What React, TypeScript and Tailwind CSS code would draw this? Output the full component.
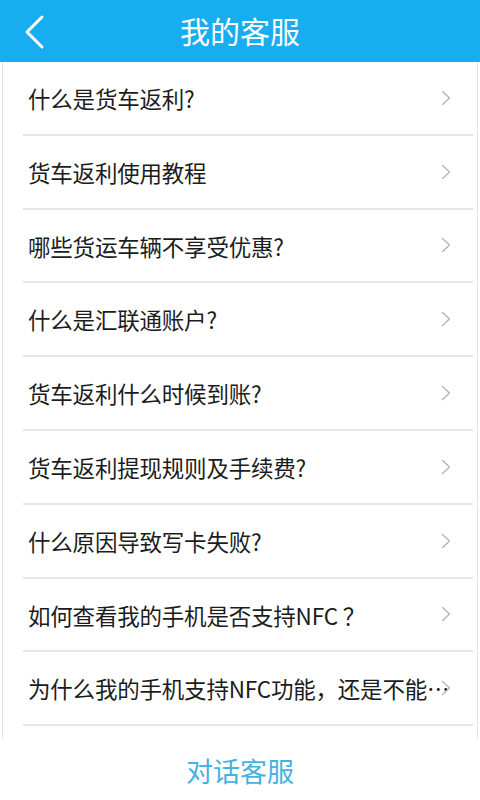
import React from 'react';

const QUESTIONS = [
  '什么是货车返利?',
  '货车返利使用教程',
  '哪些货运车辆不享受优惠?',
  '什么是汇联通账户?',
  '货车返利什么时候到账?',
  '货车返利提现规则及手续费?',
  '什么原因导致写卡失败?',
  '如何查看我的手机是否支持NFC ？',
  '为什么我的手机支持NFC功能，还是不能…',
];

const FONT = { fontFamily: '"Noto Sans CJK SC", "Noto Sans", sans-serif' };

const BackIcon = () => (
  <svg width="24" height="36" viewBox="0 0 24 36" fill="none">
    <path d="M20 3 L5 18 L20 33" stroke="white" strokeWidth="3" strokeLinecap="round" strokeLinejoin="round" />
  </svg>
);

const Chevron = () => (
  <svg width="10" height="16" viewBox="0 0 10 16" fill="none">
    <path d="M1.5 1.5 L8.5 8 L1.5 14.5" stroke="#b5b5b5" strokeWidth="1.4" strokeLinecap="round" strokeLinejoin="round" />
  </svg>
);

const App: React.FC = () => {
  return (
    <div className="w-[480px] h-[800px] bg-white flex flex-col overflow-hidden" style={FONT}>
      <header className="h-[62px] bg-[#18adf0] flex items-center relative shrink-0">
        <div className="absolute left-[22px] top-[14px]">
          <BackIcon />
        </div>
        <h1 className="flex-1 text-center text-white text-[30px] leading-none pb-[2px]">我的客服</h1>
      </header>

      <div className="mx-[2px] border-x border-[#e4e4e4] pb-[12px]">
        {QUESTIONS.map((q, idx) => (
          <div key={idx} className="h-[73.8px] pl-[20px] pr-[4px]">
            <div className="h-full flex items-center border-b-2 border-[#e6e6e6] pl-[5px] pr-[22px]">
              <span className="flex-1 min-w-0 whitespace-nowrap text-[22.5px] text-[#1c1c1c] pt-[2px] tracking-[-0.2px]">{q}</span>
              <Chevron />
            </div>
          </div>
        ))}
      </div>

      <div className="flex-1 flex items-center justify-center">
        <span className="text-[27px] text-[#45b2e2] leading-none mt-[2px]">对话客服</span>
      </div>
    </div>
  );
};

export default App;
